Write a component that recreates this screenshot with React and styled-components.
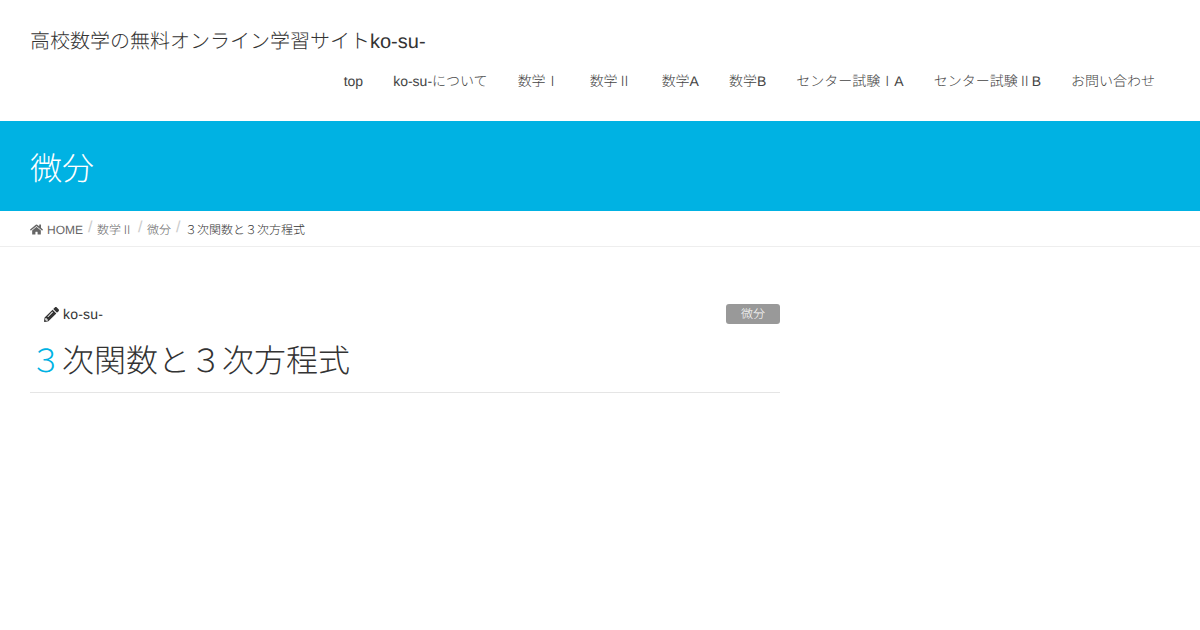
import React from 'react'
import styled, { createGlobalStyle } from 'styled-components'
import { FaHome, FaPencilAlt } from 'react-icons/fa'

const GlobalStyle = createGlobalStyle`
  html, body {
    margin: 0;
    background: #fff;
    color: #333;
    font-family: "Liberation Sans", "Noto Sans CJK JP", sans-serif;
    font-weight: 300;
    text-rendering: geometricPrecision;
  }
`

const Header = styled.header`
  height: 121px;
  padding: 0 30px;
  box-sizing: border-box;
`

const SiteTitle = styled.div`
  padding-top: 29px;
  font-size: 20px;
  line-height: 27px;
  color: #333;
`

const Nav = styled.nav`
  display: flex;
  justify-content: flex-end;
  margin-top: 15px;
  padding-right: 15px;
  gap: 30px;
`

const NavItem = styled.a`
  font-size: 14px;
  line-height: 20px;
  color: #444;
`

const PageBand = styled.div`
  height: 90px;
  background: #00b2e3;
  padding: 0 30px;
  display: flex;
  align-items: center;
`

const PageTitle = styled.h1`
  margin: 2px 0 0;
  font-size: 32px;
  font-weight: 300;
  color: #fff;
`

const Breadcrumb = styled.div`
  height: 36px;
  box-sizing: border-box;
  border-bottom: 1px solid #eee;
  padding: 2px 30px 0;
  display: flex;
  align-items: center;
  font-size: 12px;
  color: #666;
`

const Crumb = styled.span`
  display: flex;
  align-items: center;
  gap: 4px;
`

const Sep = styled.span`
  margin: -4px 4.5px 0 5px;
  font-size: 16px;
  color: #ccc;
`

const Current = styled.span`
  color: #333;
`

const Article = styled.main`
  width: 750px;
  margin: 57px 0 0 30px;
`

const Meta = styled.div`
  display: flex;
  justify-content: space-between;
  align-items: center;
  height: 20px;
  padding-left: 14px;
`

const Author = styled.span`
  display: flex;
  align-items: center;
  gap: 4px;
  font-size: 14px;
  letter-spacing: 0.2px;
  color: #333;
`

const Tag = styled.span`
  width: 54px;
  height: 20px;
  border-radius: 3px;
  background: #999;
  color: #fff;
  font-size: 12px;
  line-height: 20px;
  text-align: center;
`

const ArticleTitle = styled.h2`
  margin: 18px 0 0;
  padding: 0 0 12px;
  border-bottom: 1px solid #e5e5e5;
  font-size: 32px;
  line-height: 38px;
  font-weight: 300;
  color: #333;

  &::first-letter {
    color: #00b2e3;
  }
`

const navItems = ['top', 'ko-su-について', '数学Ⅰ', '数学Ⅱ', '数学A', '数学B', 'センター試験ⅠA', 'センター試験ⅡB', 'お問い合わせ']

export default function App() {
  return (
    <>
      <GlobalStyle />
      <Header>
        <SiteTitle>高校数学の無料オンライン学習サイトko-su-</SiteTitle>
        <Nav>
          {navItems.map((item) => (
            <NavItem key={item}>{item}</NavItem>
          ))}
        </Nav>
      </Header>
      <PageBand>
        <PageTitle>微分</PageTitle>
      </PageBand>
      <Breadcrumb>
        <Crumb><FaHome size={13} /> HOME</Crumb>
        <Sep>/</Sep>
        <Crumb>数学Ⅱ</Crumb>
        <Sep>/</Sep>
        <Crumb>微分</Crumb>
        <Sep>/</Sep>
        <Current>３次関数と３次方程式</Current>
      </Breadcrumb>
      <Article>
        <Meta>
          <Author><FaPencilAlt size={15} /> ko-su-</Author>
          <Tag>微分</Tag>
        </Meta>
        <ArticleTitle>３次関数と３次方程式</ArticleTitle>
      </Article>
    </>
  )
}
